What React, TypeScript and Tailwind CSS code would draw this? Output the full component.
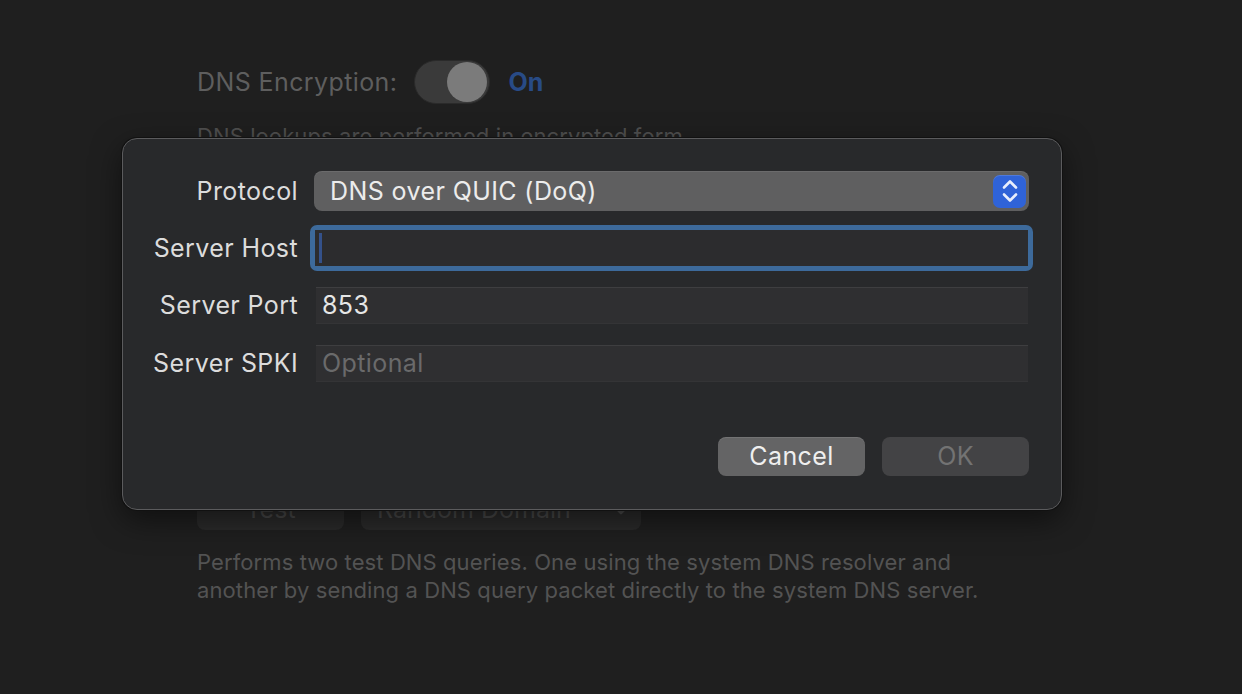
import React from "react";

const font = { fontFamily: "Inter, 'Noto Sans', sans-serif" };

function Stepper() {
  return (
    <div className="w-[33px] h-[33px] rounded-[7px] bg-[#2f63d8] flex items-center justify-center shadow-[inset_0_1px_0_rgba(255,255,255,0.15)]">
      <svg width="20" height="28" viewBox="0 0 20 28" fill="none">
        <path d="M4 10.5 L10 4.5 L16 10.5" stroke="#e8eefc" strokeWidth="2.6" strokeLinecap="round" strokeLinejoin="round" />
        <path d="M4 17.5 L10 23.5 L16 17.5" stroke="#e8eefc" strokeWidth="2.6" strokeLinecap="round" strokeLinejoin="round" />
      </svg>
    </div>
  );
}

function Label({ children }: { children: React.ReactNode }) {
  return (
    <div className="w-[175px] shrink-0 text-right text-[25px] tracking-[0.4px] leading-none text-[#dcdcdc]">
      {children}
    </div>
  );
}

export default function App() {
  return (
    <div className="relative w-[1242px] h-[694px] bg-[#1f1f1f] overflow-hidden" style={font}>
      {/* background settings page */}
      <div className="pl-[197px] pt-[60px] flex flex-col">
        <div className="flex items-center h-[44px]">
          <span className="text-[25px] tracking-[0.4px] text-[#5e5e5e] leading-none">DNS Encryption:</span>
          <div className="ml-[17px] w-[76px] h-[44px] rounded-full bg-[#3a3a3a] border border-[#2a2a2a] flex items-center justify-end pr-[2px]">
            <div className="w-[40px] h-[40px] rounded-full bg-[#7b7b7b]" />
          </div>
          <span className="ml-[18px] text-[25px] font-bold text-[#284b86] leading-none">On</span>
        </div>
        <div className="mt-[18px] text-[22px] tracking-[0.1px] text-[#4f4f4f] leading-[28px]">
          DNS lookups are performed in encrypted form.
        </div>
        <div className="h-[340px]" />
        <div className="flex items-center gap-[17px]">
          <div className="w-[147px] h-[40px] rounded-[8px] bg-[#2a2a2a] flex items-center justify-center text-[25px] text-[#474747]">
            Test
          </div>
          <div className="w-[280px] h-[40px] rounded-[8px] bg-[#2a2a2a] flex items-center justify-between pl-[16px] pr-[12px] text-[25px] text-[#474747]">
            <span>Random Domain</span>
            <svg width="16" height="12" viewBox="0 0 16 12" fill="none">
              <path d="M2 3 L8 9 L14 3" stroke="#4a4a4a" strokeWidth="2.6" strokeLinecap="round" strokeLinejoin="round" />
            </svg>
          </div>
        </div>
        <div className="mt-[18px] text-[22px] tracking-[0.1px] text-[#535353] leading-[28px]">
          Performs two test DNS queries. One using the system DNS resolver and
          <br />
          another by sending a DNS query packet directly to the system DNS server.
        </div>
      </div>

      {/* dialog sheet */}
      <div className="absolute left-[122px] top-[138px] w-[940px] h-[372px] rounded-[15px] bg-[#28292b] border border-[#5b5b5d] shadow-[0_0_0_1px_#111,0_10px_30px_rgba(0,0,0,0.5)] pt-[32px] pr-[32px] flex flex-col">
        <div className="flex items-center">
          <Label>Protocol</Label>
          <div className="ml-[16px] flex-1 h-[40px] rounded-[8px] bg-[#5f5f60] flex items-center justify-between pl-[16px] pr-[3px] shadow-[inset_0_1px_0_rgba(255,255,255,0.08)]">
            <span className="text-[25px] tracking-[0.4px] text-[#ececec] leading-none">DNS over QUIC (DoQ)</span>
            <Stepper />
          </div>
        </div>
        <div className="flex items-center mt-[14px]">
          <Label>Server Host</Label>
          <div className="ml-[12px] flex-1 mr-[-4px] p-[5px] rounded-[7px] bg-[#3d6a9b]">
            <div className="h-[36px] bg-[#2c2c2e] flex items-center pl-[4px]">
              <div className="w-[3px] h-[30px] bg-[#34518a]" />
            </div>
          </div>
        </div>
        <div className="flex items-center mt-[16px]">
          <Label>Server Port</Label>
          <div className="ml-[18px] flex-1 mr-[1px] h-[37px] bg-[#2f2f31] border-t border-[#3e3e40] border-b border-b-[#343436] flex items-center pl-[6px] text-[25px] tracking-[0.4px] text-[#e6e6e6] leading-none">
            853
          </div>
        </div>
        <div className="flex items-center mt-[21px]">
          <Label>Server SPKI</Label>
          <div className="ml-[18px] flex-1 mr-[1px] h-[37px] bg-[#2f2f31] border-t border-[#3e3e40] border-b border-b-[#343436] flex items-center pl-[6px] text-[25px] tracking-[0.4px] text-[#6a6a6b] leading-none">
            Optional
          </div>
        </div>
        <div className="flex justify-end gap-[17px] mt-[55px]">
          <div className="w-[147px] h-[39px] rounded-[8px] bg-[#646465] flex items-center justify-center text-[25px] tracking-[0.4px] text-[#efefef] shadow-[inset_0_1px_0_rgba(255,255,255,0.1)]">
            Cancel
          </div>
          <div className="w-[147px] h-[39px] rounded-[8px] bg-[#434345] flex items-center justify-center text-[25px] tracking-[0.4px] text-[#737373]">
            OK
          </div>
        </div>
      </div>
    </div>
  );
}
